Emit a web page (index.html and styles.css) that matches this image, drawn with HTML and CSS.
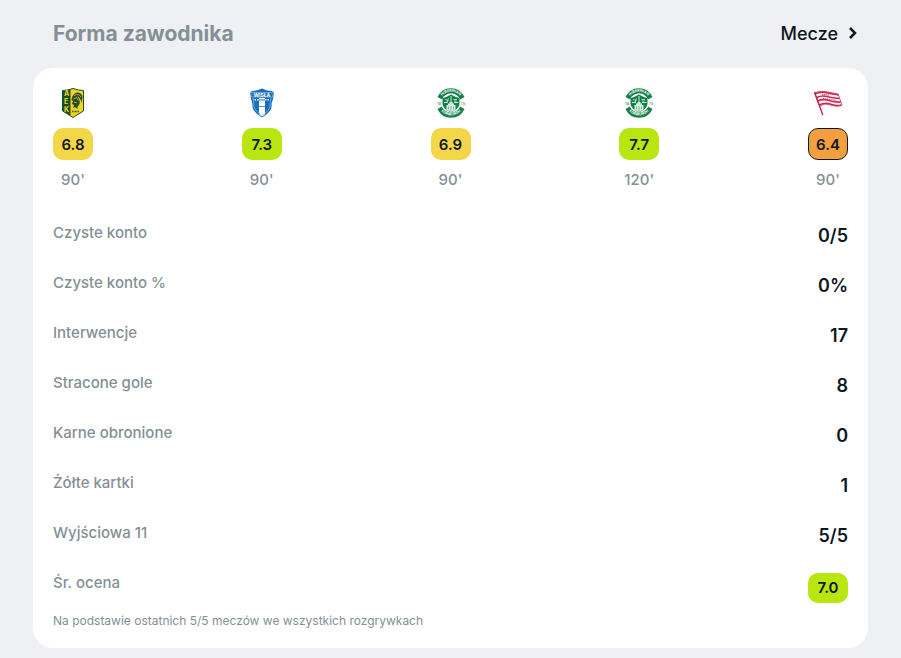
FILE: index.html
```html
<!DOCTYPE html>
<html lang="pl">
<head>
    <meta charset="UTF-8">
    <meta name="viewport" content="width=device-width, initial-scale=1.0">
    <title>Forma zawodnika</title>
    <link rel="stylesheet" href="styles.css">
</head>
<body>
    <section class="player-form">
        <header class="form-header">
            <h2>Forma zawodnika</h2>
            <a href="#" class="matches-link">Mecze
                <svg width="10" height="14" viewBox="0 0 10 14" aria-hidden="true"><path d="M2 2l5 5-5 5" fill="none" stroke="#0f171f" stroke-width="2.5"/></svg>
            </a>
        </header>

        <div class="card">
            <div class="matches">
                <div class="match">
                    <svg class="crest" viewBox="0 0 30 30" role="img" aria-label="AEK">
                        <path d="M4.500 2.500Q9 2.500 15 .5Q21 2.500 25.500 2.500V23Q22 25 15 29.500Q8 25 4.500 23Z" fill="#f2d21b" stroke="#174f2b"/>
                        <path d="M5 3Q9 3 12.500 1.500V27.500L5 23Z" fill="#12512c"/>
                        <path d="M13.500 12Q14 6 19 4.500Q24 4.500 24.500 9L23.500 15Q22.500 9 19 8.500Q22.500 11 21.500 16L19.500 19V21L17 19L15 20L16 17L14 16L15 13Z" fill="#234d28"/>
                        <path d="M16 7.500Q21 5 23 9M15.500 11l3-1.500 2 3M16 14l3 1" fill="none" stroke="#d9c026" stroke-width=".8"/>
                        <path d="M14 23.500h7" stroke="#35572a" stroke-width="1.500" stroke-dasharray="1 .5"/>
                        <g font-size="7" font-weight="700" fill="#f2d21b"><text x="6" y="8">A</text><text x="6" y="16">E</text><text x="6" y="24">K</text></g>
                    </svg>
                    <span class="rating yellow">6.8</span>
                    <span class="minutes">90'</span>
                </div>
                <div class="match">
                    <svg class="crest" viewBox="0 0 30 30" role="img" aria-label="Wisła Płock">
                        <path d="M5 3Q10 3 15 .5Q20 3 25 3L27 4.500L26 11Q24.500 14 24.500 19Q24 24 15 29.500Q6 24 5.500 19Q5.500 14 4 11L3 4.500Z" fill="#176fc0"/>
                        <path d="M12 10h6v16.500l-3 2-3-2Z" fill="#fff"/>
                        <path d="M6 10Q7 15 7 19Q8 23 15 27.500Q22 23 23 19Q23 15 24 10" fill="none" stroke="#8fbde8" stroke-width=".7"/>
                        <path d="M3.500 4.500H26.500L25.500 9H4.500Z" fill="#2470b5" stroke="#a7caea" stroke-width=".6"/>
                        <text x="15" y="8.500" font-size="5" font-weight="700" fill="#fff" text-anchor="middle">WISŁA</text>
                        <path d="M7.500 11.800H12M18 11.800h5" stroke="#fff" stroke-width="1.500" stroke-dasharray="1.500 1"/>
                        <path d="M12 11.800h6M12 18.500h6" stroke="#4e91d0" stroke-width="1.200"/>
                    </svg>
                    <span class="rating green">7.3</span>
                    <span class="minutes">90'</span>
                </div>
                <div class="match">
                    <svg class="crest" viewBox="0 0 30 30" role="img" aria-label="Hibernian">
                        <g id="hibernian">
                            <circle cx="15" cy="15" r="14.500" fill="#fff"/>
                            <path d="M1.500 9A14.800 14.800 0 0 1 28.500 9L24 11.500A10.200 10.200 0 0 0 6 11.500Z" fill="#16804a"/>
                            <path d="M1.500 21A14.800 14.800 0 0 0 28.500 21L24 18.500A10.200 10.200 0 0 1 6 18.500Z" fill="#16804a"/>
                            <circle cx="15" cy="15" r="9.700" fill="#fff"/>
                            <path d="M6.500 10Q11 9 15 6.500Q19 9 23.500 10V16Q23 21 15 24.500Q7 21 6.500 16Z" fill="#16804a"/>
                            <path d="M15 8V14.500M8 14.500H12M18 14.500h4.500" stroke="#fff" stroke-width=".8"/>
                            <path d="M9 11.500l3.500 1M12.500 10.500L11 14M17.500 11.500h3.500M18 13h2.500" stroke="#d8ebe1" stroke-width=".8"/>
                            <path d="M10.500 22V17h1.500v-1.500h1.500v-1.500h3v1.500H18V17h1.500v5L15 24Z" fill="#d8ebe1"/>
                            <path d="M12.500 21.500v-3M15 23v-5M17.500 21.500v-3" stroke="#57a37c" stroke-width=".7"/>
                            <path id="hibTop" d="M5 9.500A11.500 11.500 0 0 1 25 9.500" fill="none"/>
                            <path id="hibBottom" d="M4 21.500A13.300 13.300 0 0 0 26 21.500" fill="none"/>
                            <text font-size="3.600" font-weight="700" fill="#fff" text-anchor="middle"><textPath href="#hibTop" startOffset="50%">HIBERNIAN</textPath></text>
                            <text font-size="3.600" font-weight="700" fill="#fff" text-anchor="middle"><textPath href="#hibBottom" startOffset="50%">EDINBURGH</textPath></text>
                            <text x="1" y="16.500" font-size="4" fill="#16804a">18</text>
                            <text x="24.500" y="16.500" font-size="4" fill="#16804a">75</text>
                        </g>
                    </svg>
                    <span class="rating yellow">6.9</span>
                    <span class="minutes">90'</span>
                </div>
                <div class="match">
                    <svg class="crest" viewBox="0 0 30 30" role="img" aria-label="Hibernian"><use href="#hibernian"/></svg>
                    <span class="rating green">7.7</span>
                    <span class="minutes">120'</span>
                </div>
                <div class="match">
                    <svg class="crest" viewBox="0 0 30 30" role="img" aria-label="Cracovia">
                        <path d="M1.500 5Q6 2.500 12 3.500T25 6L29 17Q24 19.500 18 17T6.500 18Z" fill="#fff" stroke="#cf2752" stroke-width=".8"/>
                        <path d="M2 5.800Q7 3.500 12 4.500T25.500 7M3.500 9.500Q9 7 14 8.500T26.500 10.500M5 13Q10 10.500 16 12.500T27.800 14M6.500 16.800Q12 14 18 16.200T28.500 17" fill="none" stroke="#cf2752" stroke-width="1.600"/>
                        <path d="M9 6.500l7 .5M10 10.500l13 2" fill="none" stroke="#d95073" stroke-width="1.300" stroke-dasharray="1.200 .7"/>
                        <path d="M1.500 4L9.800 27" stroke="#b91f47" stroke-width="1.300"/>
                    </svg>
                    <span class="rating orange">6.4</span>
                    <span class="minutes">90'</span>
                </div>
            </div>

            <dl class="stats">
                <div class="stat"><dt>Czyste konto</dt><dd>0/5</dd></div>
                <div class="stat"><dt>Czyste konto %</dt><dd>0%</dd></div>
                <div class="stat"><dt>Interwencje</dt><dd>17</dd></div>
                <div class="stat"><dt>Stracone gole</dt><dd>8</dd></div>
                <div class="stat"><dt>Karne obronione</dt><dd>0</dd></div>
                <div class="stat"><dt>Żółte kartki</dt><dd>1</dd></div>
                <div class="stat"><dt>Wyjściowa 11</dt><dd>5/5</dd></div>
                <div class="stat"><dt>Śr. ocena</dt><dd class="rating average green">7.0</dd></div>
            </dl>
            <p class="note">Na podstawie ostatnich 5/5 meczów we wszystkich rozgrywkach</p>
        </div>
    </section>
</body>
</html>
```
FILE: styles.css
```css
* {
    box-sizing: border-box;
}

body {
    margin: 0;
    background-color: #eff0f4;
    color: #0f171f;
    font-family: Inter, "Noto Sans", sans-serif;
}

.player-form {
    padding: 0 33px 10px;
}

.form-header {
    display: flex;
    justify-content: space-between;
    align-items: center;
    height: 68px;
    padding: 0 10px 2px 20px;
}

h2 {
    margin: 0;
    font-size: 21px;
    font-weight: 700;
    color: #848f96;
}

.matches-link {
    display: flex;
    align-items: center;
    gap: 10px;
    font-size: 18px;
    font-weight: 500;
    color: #0f171f;
    text-decoration: none;
}

.card {
    padding: 20px 20px 17px;
    background-color: #fff;
    border-radius: 20px;
}

.matches {
    display: flex;
    justify-content: space-between;
}

.match {
    display: flex;
    flex-direction: column;
    align-items: center;
    width: 40px;
}

.crest {
    width: 30px;
    height: 30px;
    margin-bottom: 10px;
}

.rating {
    display: flex;
    align-items: center;
    justify-content: center;
    width: 40px;
    height: 32px;
    border-radius: 10px;
    font-size: 15px;
    font-weight: 600;
}

.yellow {
    background-color: #f4d749;
}

.green {
    background-color: #b9e510;
}

.orange {
    background-color: #f39f3f;
    border: 1px solid #0f171f;
}

.minutes {
    margin: 10px 0 20px;
    font-size: 15px;
    font-weight: 500;
    line-height: 20px;
    color: #848f96;
}

.stats {
    margin: 0;
}

.stat {
    display: flex;
    justify-content: space-between;
    align-items: flex-start;
    height: 50px;
    padding-top: 13px;
}

dt {
    font-size: 15px;
    font-weight: 500;
    line-height: 20px;
    color: #848f96;
}

dd {
    margin: 0;
    font-size: 18px;
    font-weight: 600;
    line-height: 26px;
}

.average {
    height: 30px;
    font-size: 15px;
}

.note {
    margin: 1px 0 0;
    font-size: 12px;
    line-height: 20px;
    color: #848f96;
}
```
